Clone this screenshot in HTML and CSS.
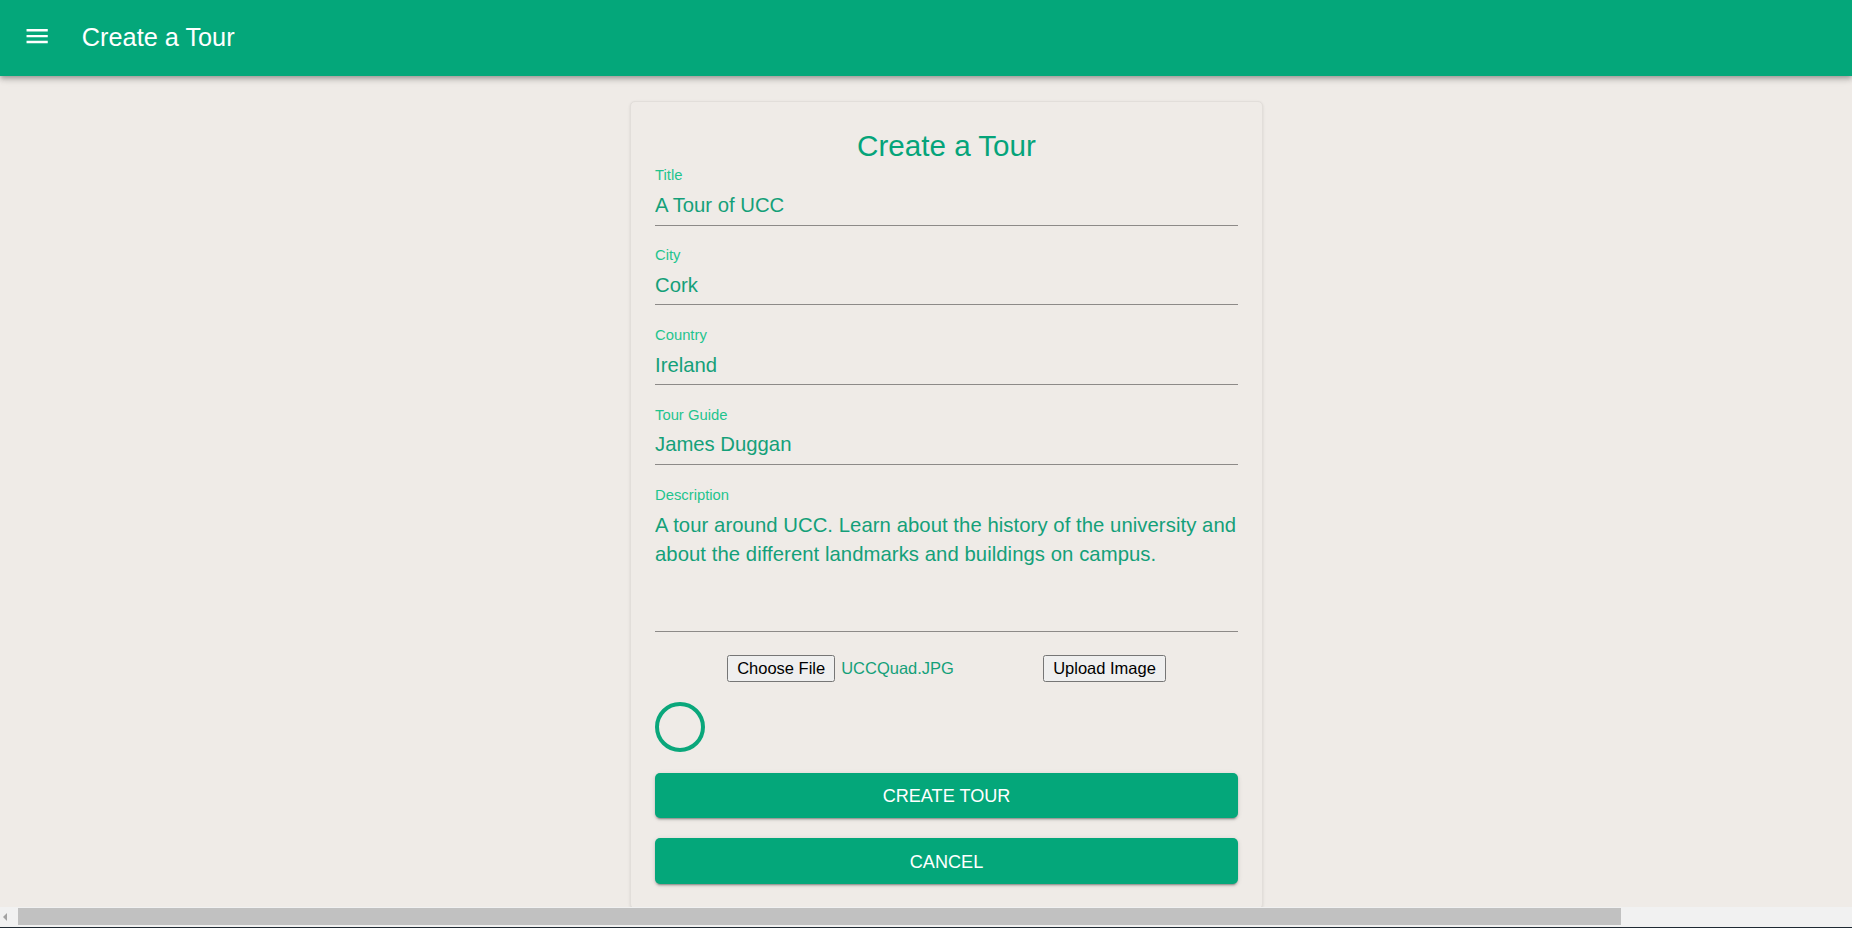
FILE: index.html
```html
<!DOCTYPE html>
<html lang="en">
<head>
<meta charset="utf-8">
<title>Create a Tour</title>
<link rel="stylesheet" href="styles.css">
</head>
<body>
<header class="appbar">
  <svg class="menu-icon" viewBox="0 0 24 24" aria-hidden="true"><path d="M3 18h18v-2H3v2zm0-5h18v-2H3v2zm0-7v2h18V6H3z"/></svg>
  <span class="appbar-title">Create a Tour</span>
</header>
<main class="main">
  <div class="stage">
    <form class="card">
      <h1 class="card-title">Create a Tour</h1>
      <div class="field">
        <label class="field-label">Title</label>
        <input class="field-input" type="text" value="A Tour of UCC">
      </div>
      <div class="field">
        <label class="field-label">City</label>
        <input class="field-input" type="text" value="Cork">
      </div>
      <div class="field">
        <label class="field-label">Country</label>
        <input class="field-input" type="text" value="Ireland">
      </div>
      <div class="field">
        <label class="field-label">Tour Guide</label>
        <input class="field-input" type="text" value="James Duggan">
      </div>
      <div class="field field-desc">
        <label class="field-label">Description</label>
        <textarea class="field-textarea" rows="4">A tour around UCC. Learn about the history of the university and about the different landmarks and buildings on campus.</textarea>
      </div>
      <div class="upload-row">
        <div class="file-widget">
          <button type="button" class="native-btn">Choose File</button>
          <span class="file-name">UCCQuad.JPG</span>
        </div>
        <button type="button" class="native-btn">Upload Image</button>
      </div>
      <div class="progress">
        <svg viewBox="0 0 50 50" class="ring" aria-hidden="true"><circle cx="25" cy="25" r="23" /></svg>
      </div>
      <button type="button" class="action-btn">CREATE TOUR</button>
      <button type="button" class="action-btn">CANCEL</button>
    </form>
  </div>
</main>
<div class="hscroll">
  <span class="hscroll-arrow"></span>
  <div class="hscroll-thumb"></div>
</div>
</body>
</html>
```

FILE: styles.css
```css
html, body {
  margin: 0;
  padding: 0;
  height: 100%;
}
body {
  display: flex;
  flex-direction: column;
  overflow: hidden;
  background: #efebe7;
  font-family: "Liberation Sans", Arial, sans-serif;
}
.appbar {
  flex: none;
  height: 76px;
  box-sizing: border-box;
  padding: 0 0 2.5px 22.5px;
  display: flex;
  align-items: center;
  background: #04a77a;
  color: #fff;
  position: relative;
  z-index: 2;
  box-shadow: 0 2px 4px -1px rgba(0,0,0,.2), 0 4px 5px 0 rgba(0,0,0,.14), 0 1px 10px 0 rgba(0,0,0,.12);
}
.menu-icon {
  width: 28.3px;
  height: 28.3px;
  fill: #fff;
  flex: none;
  margin-bottom: 1.5px;
}
.appbar-title {
  margin-left: 31px;
  font-size: 25.3px;
  line-height: 30px;
}
.main {
  flex: 1;
  min-height: 0;
  overflow: hidden;
}
.stage {
  width: 1893px;
  display: flex;
  justify-content: center;
  padding-top: 25px;
}
.card {
  width: 633px;
  box-sizing: border-box;
  padding: 27px 24px 24px;
  border: 1px solid #e2deda;
  border-radius: 5px;
  background: #efebe7;
  box-shadow: 0 1px 3px rgba(0,0,0,.10);
  display: flex;
  flex-direction: column;
}
.card-title {
  margin: 0 0 4px;
  font-size: 29.6px;
  line-height: 34px;
  font-weight: normal;
  color: #05a47a;
  text-align: center;
}
.field {
  display: flex;
  flex-direction: column;
  margin-bottom: 21.4px;
}
.field-label {
  font-size: 14.8px;
  line-height: 17px;
  color: #1fc48e;
  margin-bottom: 9px;
}
.field-input,
.field-textarea {
  display: block;
  width: 100%;
  box-sizing: border-box;
  margin: 0;
  border: none;
  border-bottom: 1.5px solid #8d8a88;
  background: transparent;
  color: #14a079;
  font-family: "Liberation Sans", Arial, sans-serif;
  font-size: 20.3px;
  outline: none;
}
.field-input {
  height: 32.5px;
  line-height: 24px;
  padding: 0 0 7px;
}
.field-desc {
  margin-bottom: 0;
}
.field-desc .field-label {
  margin-bottom: 7.7px;
}
.field-textarea {
  height: 121.1px;
  line-height: 28.4px;
  padding: 0 0 6px;
  letter-spacing: 0.06px;
  resize: none;
  overflow: hidden;
}
.upload-row {
  margin-top: 22.8px;
  display: flex;
  justify-content: center;
  gap: 4px;
}
.file-widget {
  width: 312px;
  display: flex;
  align-items: center;
  gap: 6px;
}
.native-btn {
  height: 26.5px;
  box-sizing: border-box;
  padding: 0 9px;
  border: 1px solid #767676;
  border-radius: 2.5px;
  background: #efefef;
  color: #000;
  font-family: "Liberation Sans", Arial, sans-serif;
  font-size: 16.5px;
  line-height: 24px;
  flex: none;
}
.file-name {
  color: #14a079;
  font-size: 16.5px;
  line-height: 24px;
}
.progress {
  margin-top: 20.7px;
  height: 50px;
}
.ring {
  width: 50px;
  height: 50px;
  display: block;
}
.ring circle {
  fill: none;
  stroke: #0aa77b;
  stroke-width: 4;
}
.action-btn {
  margin-top: 20.3px;
  height: 45.5px;
  padding-top: 2.5px;
  border: none;
  border-radius: 5px;
  background: #04a77a;
  color: #fff;
  font-family: "Liberation Sans", Arial, sans-serif;
  font-size: 18.1px;
  line-height: 22px;
  box-shadow: 0 3px 1px -2px rgba(0,0,0,.2), 0 2px 2px 0 rgba(0,0,0,.14), 0 1px 5px 0 rgba(0,0,0,.12);
}
.action-btn + .action-btn {
  margin-top: 20px;
}
.hscroll {
  flex: none;
  height: 21px;
  box-sizing: border-box;
  background: #f1f1f1;
  border-bottom: 1px solid #1f2a33;
  display: flex;
  align-items: center;
  padding-left: 3px;
  padding-bottom: 1px;
}
.hscroll-arrow {
  width: 0;
  height: 0;
  border-top: 4px solid transparent;
  border-bottom: 4px solid transparent;
  border-right: 4px solid #a3a3a3;
  margin-right: 10.5px;
}
.hscroll-thumb {
  width: 1603px;
  height: 16.7px;
  background: #c1c1c1;
}
```
